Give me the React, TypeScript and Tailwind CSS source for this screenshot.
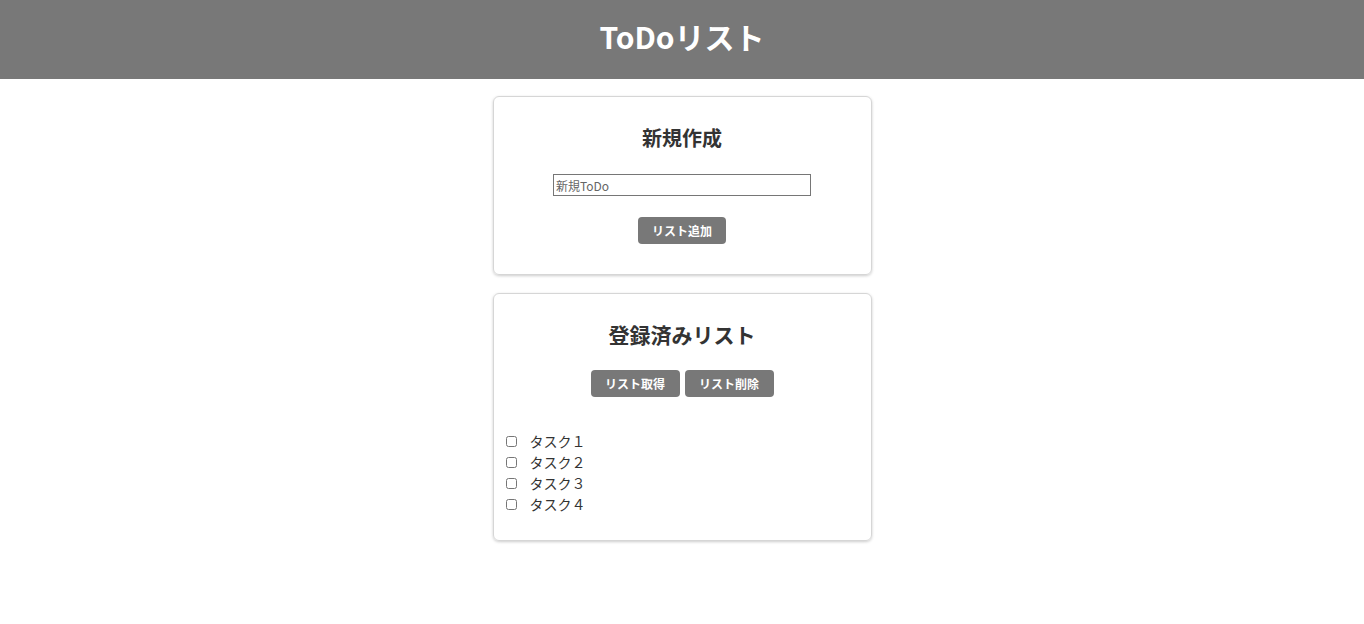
export default function App() {
  const tasks = ["タスク１", "タスク２", "タスク３", "タスク４"];

  return (
    <div className="min-h-screen bg-white font-['Noto_Sans_CJK_JP','Noto_Sans',sans-serif] text-[#333]">
      {/* Header */}
      <header className="h-[79px] bg-[#787878] flex items-center justify-center pb-[7px]">
        <h1 className="text-[30px] font-bold text-white leading-none">ToDoリスト</h1>
      </header>

      <main className="flex flex-col items-center gap-[18px] pt-[17px]">
        {/* New */}
        <section className="w-[379px] rounded-md border border-[#d6d6d6] shadow-[0_1px_3px_rgba(0,0,0,0.2)] flex flex-col items-center pt-[27px] pb-[30px]">
          <h2 className="text-[20px] font-bold leading-[28px]">新規作成</h2>
          <input
            type="text"
            placeholder="新規ToDo"
            className="mt-[22px] w-[258px] h-[22px] border border-[#767676] px-[2px] text-[12px] text-[#333] placeholder:text-[#666] outline-none"
          />
          <button className="mt-[21px] w-[88px] h-[27px] rounded bg-[#787878] text-white text-[12px] font-bold">
            リスト追加
          </button>
        </section>

        {/* Registered */}
        <section className="w-[379px] rounded-md border border-[#d6d6d6] shadow-[0_1px_3px_rgba(0,0,0,0.2)] pt-[26px] pb-[25px]">
          <h2 className="text-center text-[21px] font-bold leading-[28px]">登録済みリスト</h2>
          <div className="mt-[22px] flex justify-center gap-[5px]">
            <button className="w-[89px] h-[27px] rounded bg-[#787878] text-white text-[12px] font-bold">
              リスト取得
            </button>
            <button className="w-[89px] h-[27px] rounded bg-[#787878] text-white text-[12px] font-bold">
              リスト削除
            </button>
          </div>
          <ul className="mt-[34px] pl-[12px]">
            {tasks.map((t) => (
              <li key={t} className="flex items-center h-[21px] text-[14px]">
                <input type="checkbox" className="w-[11px] h-[11px] m-0" />
                <span className="ml-[13px]">{t}</span>
              </li>
            ))}
          </ul>
        </section>
      </main>
    </div>
  );
}
